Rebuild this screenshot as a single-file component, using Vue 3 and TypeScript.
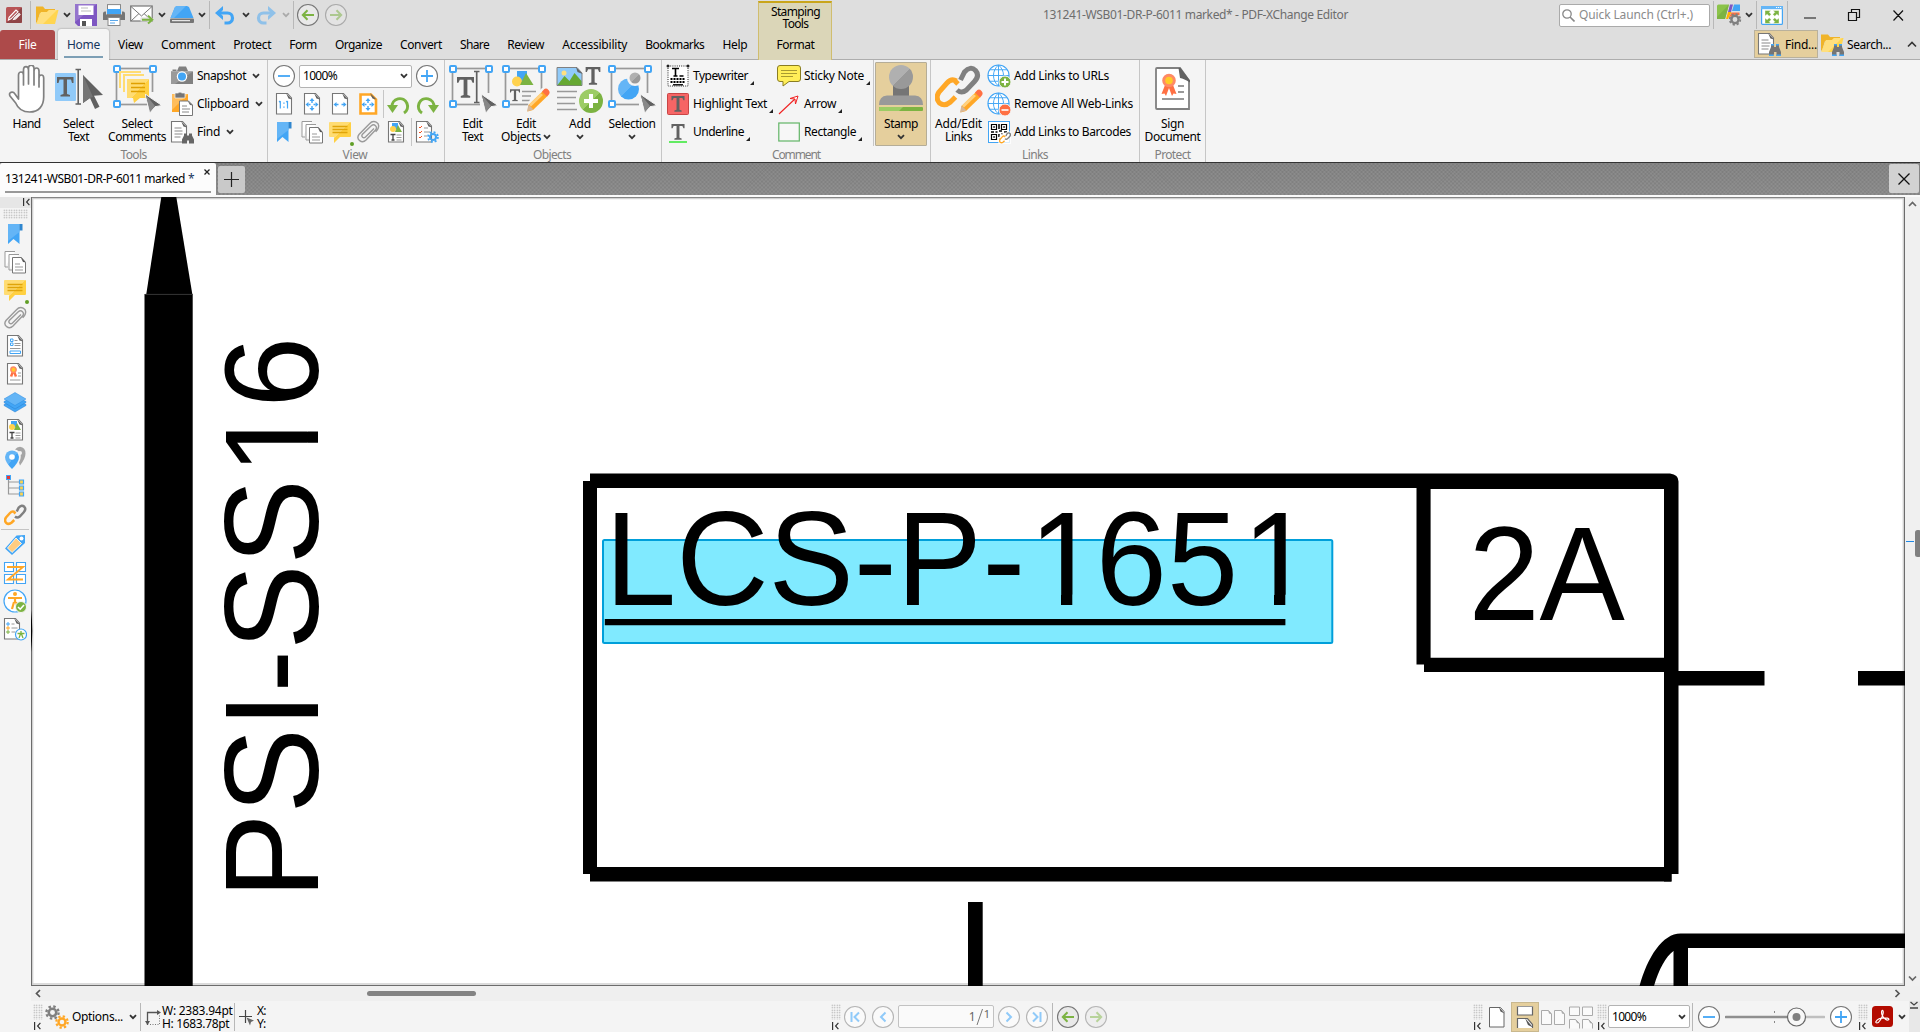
<script setup lang="ts">
import { h } from 'vue'

/** Spreads letter-spacing so that a label takes the given width in pixels. */
const vFit = {
  mounted(el: HTMLElement, binding: { value: number }) {
    const natural = el.getBoundingClientRect().width
    const count = (el.textContent ?? '').length
    if (natural > 0 && count > 0) {
      el.style.letterSpacing = `${(binding.value - natural) / count}px`
    }
  },
}

interface IcProps { n: string; w?: number; h?: number }
const Ic = (p: IcProps) =>
  h('svg', { width: p.w ?? 24, height: p.h ?? p.w ?? 24, class: 'ic' }, [
    h('use', { href: '#i-' + p.n, width: '100%', height: '100%' }),
  ])
Ic.props = ['n', 'w', 'h']

const tabs: { label: string; w: number }[] = [
  { label: 'View', w: 25 },
  { label: 'Comment', w: 54 },
  { label: 'Protect', w: 38 },
  { label: 'Form', w: 27.5 },
  { label: 'Organize', w: 47 },
  { label: 'Convert', w: 42 },
  { label: 'Share', w: 29 },
  { label: 'Review', w: 37 },
  { label: 'Accessibility', w: 65 },
  { label: 'Bookmarks', w: 59 },
  { label: 'Help', w: 25 },
]

const tools = [
  { icon: 'snapshot', label: 'Snapshot', w: 49 },
  { icon: 'clipboard', label: 'Clipboard', w: 52 },
  { icon: 'find', label: 'Find', w: 23 },
]
const commentA = [
  { icon: 'typewriter', label: 'Typewriter', w: 55 },
  { icon: 'highlight', label: 'Highlight Text', w: 74 },
  { icon: 'underline', label: 'Underline', w: 51 },
]
const commentB = [
  { icon: 'sticky', label: 'Sticky Note', w: 60 },
  { icon: 'arrow', label: 'Arrow', w: 32 },
  { icon: 'rect', label: 'Rectangle', w: 52 },
]
const links = [
  { icon: 'urladd', label: 'Add Links to URLs', w: 95 },
  { icon: 'urldel', label: 'Remove All Web-Links', w: 119 },
  { icon: 'barcode', label: 'Add Links to Barcodes', w: 117 },
]
const sideTop = ['bookmark', 'pages', 'note', 'clip', 'form', 'cert', 'layers', 'content', 'pins', 'tree', 'link']
const sideBottom = ['tag', 'order', 'access', 'accrep']
</script>

<template>
  <svg class="defs" width="0" height="0">
    <defs>
      <linearGradient id="g-blue" x1="0" y1="0" x2="1" y2="1"><stop offset=".5" stop-color="#64b5f6" /><stop offset=".5" stop-color="#42a5f5" /></linearGradient>
      <linearGradient id="g-yellow" x1="0" y1="0" x2="1" y2="1"><stop offset=".5" stop-color="#ffdc73" /><stop offset=".5" stop-color="#ffd042" /></linearGradient>
      <linearGradient id="g-green" x1="0" y1="0" x2="1" y2="1"><stop offset=".5" stop-color="#9ccc65" /><stop offset=".5" stop-color="#7cb342" /></linearGradient>
      <linearGradient id="g-grey" x1="0" y1="0" x2="1" y2="1"><stop offset=".5" stop-color="#b0b0b0" /><stop offset=".5" stop-color="#999" /></linearGradient>
      <clipPath id="footless"><path d="M-5-130H720V-9.900H-5zM-5-10.500H421V6H-5zM456-10.500h11.300V6H456zM490-10.500H634V6H490zM669-10.500h11.300V6H669z" /></clipPath>
    </defs>
    <symbol id="i-chev" viewBox="0 0 8 6"><path d="M1 1.200l3 3 3-3" fill="none" stroke="#333" stroke-width="1.800" /></symbol>
    <symbol id="i-chevlt" viewBox="0 0 8 6"><path d="M1 1.200l3 3 3-3" fill="none" stroke="#aaa" stroke-width="1.800" /></symbol>
    <symbol id="i-app" viewBox="0 0 16 16">
      <rect width="16" height="16" rx="1.500" fill="#b85456" /><path d="M0 16L16 0v14.500q0 1.500-1.500 1.500z" fill="#8f4446" />
      <path d="M3 10.500l7-7.500 2 1.800-7 7-2.500 1.200zM8 11.500l5-5 1 1-4.500 4.500-2 .500z" fill="none" stroke="#fff" stroke-width="1.100" />
    </symbol>
    <symbol id="i-folder" viewBox="0 0 24 20">
      <path d="M1 1.500h7l2 2.500h10v4H5L2 17.500H1z" fill="#f0b429" /><path d="M6 7h6l2-2h9.500L20 19H1.500z" fill="#ffd550" /><path d="M6 7h6l2-2h8L8 19H1.500z" fill="#ffdf7e" />
    </symbol>
    <symbol id="i-save" viewBox="0 0 22 22">
      <path d="M0 0h22v22H3l-3-3z" fill="#7e57c2" /><path d="M0 0h22L0 18z" fill="#9575cd" />
      <rect x="3.500" y="1.500" width="15" height="9.500" fill="#fff" /><path d="M6 4h7M6 7h10" stroke="#bbb" stroke-width="1" />
      <rect x="5" y="15" width="12" height="7" fill="#fff" /><rect x="7" y="17" width="4" height="5" fill="#555" />
    </symbol>
    <symbol id="i-print" viewBox="0 0 22 22">
      <rect x="4.500" y=".600" width="13" height="10" fill="#fff" stroke="#888" /><path d="M0 9.500q0-2 2-2h1v3h16v-3h1q2 0 2 2V16H0z" fill="#757575" />
      <path d="M4 5h14v5H4z" fill="#42a5f5" /><rect x="5" y="13.500" width="12" height="8" fill="#fff" stroke="#888" /><path d="M7 16.500h8M7 19h5" stroke="#5aa7ea" />
    </symbol>
    <symbol id="i-mail" viewBox="0 0 24 20">
      <rect x=".700" y="1" width="21.500" height="15" fill="#fff" stroke="#777" stroke-width="1.200" /><path d="M1 1.500l10.500 9.500L22 1.500M1 16l8-7.500M22 16l-8-7.500" fill="none" stroke="#777" stroke-width="1" />
      <path d="M10.500 12.500h7V9L24 14.700 17.500 20v-3.500h-7z" fill="#dedede" /><path d="M12 14.700h10M18 10.800l4.300 3.900-4.300 3.900" fill="none" stroke="#7cb342" stroke-width="2" />
    </symbol>
    <symbol id="i-scan" viewBox="0 0 24 18">
      <path d="M5 1l2-1h10l2 1 4.500 11H.500z" fill="#42a5f5" /><path d="M5 1l2-1h9L4 12H.500z" fill="#64b5f6" /><rect y="12.500" width="24" height="4.500" rx="1" fill="#757575" /><path d="M2 14.700h18" stroke="#fff" />
    </symbol>
    <symbol id="i-undo" viewBox="0 0 21 19"><path d="M3 7h9.500a5 5 0 0 1 0 10H9.500" fill="none" stroke="#42a5f5" stroke-width="3.200" /><path d="M0 7L8 0v4L5 7l3 3v4z" fill="#42a5f5" /></symbol>
    <symbol id="i-back" viewBox="0 0 24 24"><circle cx="12" cy="12" r="10.500" fill="#e9e9e9" stroke="#777" stroke-width="1.100" /><path d="M18 12H7M11.500 7.200L6.800 12l4.700 4.800" fill="none" stroke="#7cb342" stroke-width="2" /></symbol>
    <symbol id="i-first" viewBox="0 0 24 24"><circle cx="12" cy="12" r="10.500" fill="#fafafa" stroke="#b5b5b5" stroke-width="1.100" /><path d="M8.500 7v10M16 7.500L11.500 12l4.500 4.500" fill="none" stroke="#90caf9" stroke-width="2" /></symbol>
    <symbol id="i-prev" viewBox="0 0 24 24"><circle cx="12" cy="12" r="10.500" fill="#fafafa" stroke="#b5b5b5" stroke-width="1.100" /><path d="M14.500 7.500L10 12l4.500 4.500" fill="none" stroke="#90caf9" stroke-width="2" /></symbol>
    <symbol id="i-minus" viewBox="0 0 24 24"><circle cx="12" cy="12" r="10.500" fill="#fff" stroke="#777" stroke-width="1.100" /><path d="M6 12h12" stroke="#42a5f5" stroke-width="1.800" /></symbol>
    <symbol id="i-plus" viewBox="0 0 24 24"><circle cx="12" cy="12" r="10.500" fill="#fff" stroke="#777" stroke-width="1.100" /><path d="M6 12h12M12 6v12" stroke="#42a5f5" stroke-width="1.800" /></symbol>
    <symbol id="i-map" viewBox="0 0 26 22">
      <path d="M0 2q0-1.500 1.500-1.500H12L8 15H0z" fill="#8bc34a" /><path d="M0 13L12 .500 8 15H0z" fill="#7cb342" /><path d="M13 .500h3L14 8h-3z" fill="#7e57c2" /><path d="M17 .500h6V7h-8z" fill="#42a5f5" /><path d="M14.500 8.500h8V11L12 13z" fill="#ff7043" /><path d="M14.500 8l-3.500 7H9l2-7z" fill="#ffb300" />
      <circle cx="18" cy="15.500" r="3.600" fill="none" stroke="#808080" stroke-width="2.400" /><circle cx="18" cy="15.500" r="5.300" fill="none" stroke="#808080" stroke-width="1.800" stroke-dasharray="2.200 1.960" />
    </symbol>
    <symbol id="i-full" viewBox="0 0 22 19">
      <rect x=".600" y=".600" width="20.800" height="17.800" rx="1" fill="#fff" stroke="#42a5f5" stroke-width="1.200" /><path d="M0 0h22v3.200H0z" fill="#64b5f6" /><path d="M15 1.500h1.200M17 1.500h1.200M19 1.500h1.200" stroke="#fff" />
      <path d="M4 4.500h6L8.200 6.300l2 2-2 2-2-2L4 10zM18 4.500h-6l1.800 1.800-2 2 2 2 2-2L18 10zM4 17.500h6l-1.800-1.800 2-2-2-2-2 2L4 12zM18 17.500h-6l1.800-1.800-2-2 2-2 2 2L18 12z" fill="#7cb342" stroke="#fff" stroke-width=".400" />
    </symbol>
    <symbol id="i-glass" viewBox="0 0 13 13"><circle cx="5" cy="5" r="4.200" fill="none" stroke="#888" stroke-width="1.300" /><path d="M8 8l4.500 4.500" stroke="#888" stroke-width="1.600" /></symbol>
    <symbol id="i-doc" viewBox="0 0 24 24"><path d="M4.500 1.500h11l4 4.500v16h-15z" fill="#fff" stroke="#777" stroke-width="1.100" /><path d="M14 1l6 6.500-3.500-1z" fill="#616161" /></symbol>
    <symbol id="i-bino" viewBox="0 0 12 12"><path d="M2 1h3v2h2V1h3v2l2 5v4H7.500V8h-3v4H0V8l2-5z" fill="#757575" /><path d="M2 0h3v1.500H2zM7 0h3v1.500H7zM0 10.500h4.500V12H0zM7.500 10.500H12V12H7.500z" fill="#42a5f5" /></symbol>
    <symbol id="i-finddoc" viewBox="0 0 24 24"><use href="#i-doc" x="-3" y="0" width="24" height="24" /><path d="M4.500 8h7M4.500 11h9M4.500 14h8M4.500 17h7" stroke="#888" /><use href="#i-bino" x="12" y="12" width="12" height="12" /></symbol>
    <symbol id="i-searchf" viewBox="0 0 24 24"><use href="#i-folder" x="0" y="1" width="24" height="20" /><use href="#i-bino" x="12" y="12" width="12" height="12" /></symbol>
    <symbol id="i-hand" viewBox="0 0 48 48">
      <path d="M15.500 27V10c0-4 5-4 5 0v10V5c0-4.500 5-4.500 5 0v14V3.500c0-4.500 5.500-4.500 5.500 0V20 6c0-4 5-4 5 0v16-9c0-4 4.700-4 4.700 0v19c0 9-5 15-14 15-8 0-12-4-14-9L7 31c-2-4 3-5 5-2l3.500 5z" fill="#fff" stroke="#808080" stroke-width="1.700" stroke-linejoin="round" />
    </symbol>
    <symbol id="i-seltext" viewBox="0 0 48 48">
      <rect y="8" width="21" height="28" rx="1" fill="#90caf9" />
      <path d="M2 12h16.500v6H17l-1-3.500h-4V29l3 1v1.500H5.500V30l3-1V14.500h-4l-1 3.500H2z" fill="#616161" />
      <path d="M20.500 4.500h5.500M20.500 39h5.500M23.200 4.500V39" stroke="#616161" stroke-width="1.600" />
      <path d="M28 10l20 20-9 .800 5.500 11-4.500 2.200-5-11L28 38z" fill="#616161" /><path d="M28 10l10 22-3 1-7 5z" fill="#757575" />
    </symbol>
    <symbol id="i-frame" viewBox="0 0 48 48">
      <rect x="3.500" y="3.500" width="36" height="36" fill="none" stroke="#999" stroke-width="1.700" />
      <g fill="#fff" stroke="#42a5f5" stroke-width="2"><rect x="1" y="1" width="6" height="6" rx="1" /><rect x="37" y="1" width="6" height="6" rx="1" /><rect x="1" y="36" width="6" height="6" rx="1" /></g>
    </symbol>
    <symbol id="i-corner" viewBox="0 0 17 20"><path d="M0 0l17 11.500-7 1.200L5 18.500z" fill="#616161" stroke="#f4f4f4" stroke-width="1" /><path d="M1 1l9 11-5 6z" fill="#888" /></symbol>
    <symbol id="i-selcom" viewBox="0 0 48 48">
      <use href="#i-frame" width="48" height="48" /><path d="M34 32v12H46V27H38z" fill="#f4f4f4" />
      <path d="M7 23V7h21M11 27V10h20" fill="none" stroke="#ffdc73" stroke-width="2" /><path d="M14 14h22v19H27l-6 5-1-5h-6z" fill="url(#g-yellow)" /><path d="M18 18.500h14M18 22.500h14M18 26.500h14" stroke="#e0a000" stroke-width="1.500" />
      <use href="#i-corner" x="32" y="29" width="17" height="20" />
    </symbol>
    <symbol id="i-snapshot" viewBox="0 0 24 24"><path d="M1 7.500h22V20H1zM7 7l2-4.500h7L18 7zM2.500 5.500h4V7h-4z" fill="#808080" /><path d="M1 7.500h22L5 20H1z" fill="#9a9a9a" /><circle cx="12" cy="12.500" r="5.200" fill="#fff" /><circle cx="12" cy="12.500" r="4" fill="#42a5f5" /></symbol>
    <symbol id="i-clipboard" viewBox="0 0 24 24">
      <path d="M2 2h16v18H2z" fill="#ffa726" /><path d="M2 2h16L2 18z" fill="#ffbd5b" /><path d="M5 1h3q2-2 4 0h3v5H5z" fill="#757575" stroke="#f4f4f4" stroke-width=".700" />
      <path d="M9.500 9h9l4 4v10.500h-13z" fill="#fff" stroke="#777" /><path d="M17.500 8.500l5.500 5-3-.500z" fill="#666" /><path d="M12 14h5M12 17h8M12 20h7" stroke="#888" />
    </symbol>
    <symbol id="i-find" viewBox="0 0 24 24"><use href="#i-doc" x="-3" y="0" width="24" height="24" /><path d="M4.500 8h7M4.500 11h8M4.500 14h8M4.500 17h6" stroke="#888" /><path d="M14 13.500h3v2h2v-2h3v2l2 4v4h-5v-3h-2v3h-5v-4l2-4z" fill="#666" /></symbol>
    <symbol id="i-one" viewBox="0 0 24 24"><use href="#i-doc" width="24" height="24" /><path d="M8.300 9v7.500M7 10l1.300-1M15.500 9v7.500M14.200 10l1.300-1" fill="none" stroke="#42a5f5" stroke-width="1.200" /><path d="M11.300 10.500h1.300v1.300h-1.300zM11.300 14.500h1.300v1.300h-1.300z" fill="#42a5f5" /></symbol>
    <symbol id="i-cross4" viewBox="0 0 24 24"><path d="M12 6l2.500 3h-5zM12 19l2.500-3h-5zM5.500 12.500l3-2.500v5zM18.500 12.500l-3-2.500v5z" fill="#42a5f5" /><path d="M12 9v2M12 14v2M8.500 12.500h2M13.500 12.500h2" stroke="#42a5f5" stroke-width="1.400" /></symbol>
    <symbol id="i-fitpage" viewBox="0 0 24 24"><use href="#i-doc" width="24" height="24" /><use href="#i-cross4" width="24" height="24" /></symbol>
    <symbol id="i-fitwidth" viewBox="0 0 24 24"><use href="#i-doc" width="24" height="24" /><path d="M5.500 12.500l3-2.500v5zM18.500 12.500l-3-2.500v5z" fill="#42a5f5" /><path d="M8 12.500h2.500M13.500 12.500h2.500" stroke="#42a5f5" stroke-width="1.400" /></symbol>
    <symbol id="i-fitvis" viewBox="0 0 24 24"><path d="M4.500 2.500h10.500l5 5v14h-15.500z" fill="#fff" stroke="#ffa726" stroke-width="2.600" /><path d="M14 1l6.500 6.500-4-1z" fill="#616161" /><use href="#i-cross4" width="24" height="24" /></symbol>
    <symbol id="i-rotl" viewBox="0 0 24 24"><path d="M5 15a7.800 7.800 0 1 1 12 6" fill="none" stroke="#7cb342" stroke-width="3" /><path d="M0 13h11l-5.500 8z" fill="#7cb342" /></symbol>
    <symbol id="i-bookmark" viewBox="0 0 24 24"><path d="M5 2h11.500v20l-6-5L5 22z" fill="#42a5f5" /><path d="M5 2h11.500v8L5 19z" fill="#64b5f6" /><path d="M16.500 2h3v6.500h-3z" fill="#2f86cf" /></symbol>
    <symbol id="i-pages" viewBox="0 0 24 24"><g fill="#fff" stroke="#999"><path d="M2 17V1.500h10M2 17h3M6 20V4.500h10M6 20h3" /></g><path d="M9.500 7.500h9l4 5v10.500h-13z" fill="#fff" stroke="#777" /><path d="M17.500 7l5.500 5.500-3-.500z" fill="#555" /><path d="M12 14h5M12 17h8M12 20h8" stroke="#999" /></symbol>
    <symbol id="i-note" viewBox="0 0 24 24"><path d="M2 2h20q1 0 1 1v13q0 1-1 1H12l-6 6v-6H2q-1 0-1-1V3q0-1 1-1z" fill="url(#g-yellow)" /><path d="M4.500 6.500h15M4.500 9.500h15M4.500 12.500h15" stroke="#dfa40a" stroke-width="1.300" /></symbol>
    <symbol id="i-clip" viewBox="0 0 24 24"><path d="M18 9l-8.500 8.500c-2 2-4.800-.500-3-2.700L15 6.500c3.500-3 7 .800 4.500 4L10 20.500c-4 4-10.500-.500-7-5.500L13.500 4.200c4-4.400 10.800-1.500 8.700 4.500-.500 1.500-1.500 2.500-2.500 3.500" fill="none" stroke="#9a9a9a" stroke-width="1.400" transform="translate(0 -.500)" /></symbol>
    <symbol id="i-content" viewBox="0 0 24 24"><use href="#i-doc" width="24" height="24" /><path d="M8 3h6v6H8z" fill="#42a5f5" /><circle cx="9" cy="9" r="3" fill="#ffd24d" /><path d="M14 5l4 7h-7z" fill="#7cb342" /><path d="M6.500 14.500h5M9 14.500V20M7.500 20h3" stroke="#444" stroke-width="1.300" /><path d="M12.500 15h5M12.500 17.500h5M12.500 20h5" stroke="#999" /></symbol>
    <symbol id="i-gear" viewBox="0 0 14 14"><circle cx="7" cy="7" r="3.500" fill="none" stroke="currentColor" stroke-width="2.400" /><circle cx="7" cy="7" r="5.700" fill="none" stroke="currentColor" stroke-width="2.200" stroke-dasharray="2.300 2.177" /></symbol>
    <symbol id="i-optdoc" viewBox="0 0 24 24"><use href="#i-doc" x="-3" y="0" width="24" height="24" /><path d="M4 7l1 1 2-2M4 12l1 1 2-2M4 17l1 1 2-2" fill="none" stroke="#f4511e" /><path d="M9 8h4M9 12h6M9 16h3" stroke="#999" /><use href="#i-gear" x="12" y="11" width="12" height="12" color="#42a5f5" /></symbol>
    <symbol id="i-bigT" viewBox="0 0 18 22"><path d="M0 0h18v6h-1.500L15 2.800h-4V19l3 1v1.800H4V20l3-1V2.800H3L1.500 6H0z" fill="#616161" /></symbol>
    <symbol id="i-edtext" viewBox="0 0 48 48"><use href="#i-frame" width="48" height="48" /><path d="M31 34v10h14V28H36z" fill="#f4f4f4" /><use href="#i-bigT" x="8" y="12" width="17" height="21" /><path d="M25 6.500h5.500M25 37.500h5.500M27.700 6.500v31" stroke="#616161" stroke-width="1.700" /><use href="#i-corner" x="32" y="29" width="17" height="20" /></symbol>
    <symbol id="i-pencil" viewBox="0 0 24 24"><path d="M17 3l4.500 5L7 22l-5.500 1.500L2.500 17z" fill="#ffa726" /><path d="M14.500 5L3 16.500l2 2L17 7z" fill="#ffd180" /><path d="M17 2.500Q19.500-1 22.500 2q2.500 3-.500 5.500l-1 1L16 3.500z" fill="#ff7043" /><path d="M2.500 16.500l5 5-6.500 2z" fill="#d7b899" /></symbol>
    <symbol id="i-edobj" viewBox="0 0 48 48">
      <use href="#i-frame" width="48" height="48" /><path d="M15 6h10v12H15z" fill="#42a5f5" /><circle cx="15" cy="16.500" r="5" fill="#ffd24d" /><path d="M24 8l7.500 12H18z" fill="#7cb342" /><use href="#i-bigT" x="8" y="24" width="10" height="12.500" /><path d="M20 26.500h14M20 31h9M20 35.500h8" stroke="#999" stroke-width="1.400" />
      <path d="M24 46l3-10 13-13h8v25z" fill="#f4f4f4" /><use href="#i-pencil" x="24" y="23" width="24" height="24" />
    </symbol>
    <symbol id="i-add" viewBox="0 0 48 48">
      <path d="M1 2.500h20l5 5.500v12.500H1z" fill="#90caf9" stroke="#808080" /><circle cx="8" cy="8" r="2.500" fill="#ffe082" /><path d="M1.500 20l7-9 5 5 5-8 7 8v4.500z" fill="#66a832" /><path d="M20 2l6.500 7-5-2z" fill="#616161" /><use href="#i-bigT" x="29" y="2" width="16" height="18" />
      <path d="M1 26.500h20M1 32.500h19M1 38.500h18M1 44.500h20" stroke="#999" stroke-width="1.500" /><circle cx="35" cy="36" r="12" fill="url(#g-green)" /><path d="M28 36h14M35 29v14" stroke="#fff" stroke-width="4" />
    </symbol>
    <symbol id="i-selection" viewBox="0 0 48 48"><use href="#i-frame" width="48" height="48" /><path d="M31 34v10h14V28H36z" fill="#f4f4f4" /><circle cx="20.500" cy="24" r="10.500" fill="url(#g-blue)" /><circle cx="27" cy="13" r="8" fill="#f4f4f4" /><circle cx="27" cy="13" r="5.500" fill="url(#g-grey)" /><use href="#i-corner" x="32" y="29" width="17" height="20" /></symbol>
    <symbol id="i-typewriter" viewBox="0 0 24 24"><rect x="2" y="2" width="20" height="20" fill="#fff" stroke="#222" stroke-dasharray="1 1.200" /><g fill="#222"><circle cx="2" cy="2" r="1.500" /><circle cx="22" cy="2" r="1.500" /></g><path d="M6 4.500h7M9.500 4.500v7.500M7.500 12h4M13.500 12h4" stroke="#000" stroke-width="1.600" /><path d="M4.500 15h15M4.500 18h15" stroke="#000" stroke-width="2.200" stroke-dasharray="2 1" /><path d="M7 20.800h10" stroke="#000" stroke-width="1.400" /></symbol>
    <symbol id="i-highlight" viewBox="0 0 24 24"><rect x="1.500" y="1.500" width="21" height="21" rx="1" fill="#f66565" stroke="#c94545" /><use href="#i-bigT" x="5" y="4" width="14" height="16" /></symbol>
    <symbol id="i-underline" viewBox="0 0 24 24"><use href="#i-bigT" x="5" y="4" width="14" height="16" /><path d="M3 22h18" stroke="#00e400" stroke-width="1.200" /></symbol>
    <symbol id="i-sticky" viewBox="0 0 24 24"><path d="M3 1.500h18q2.500 0 2.500 2.500v11q0 2.500-2.500 2.500H12L6 22v-4.500H3Q.500 17.500.500 15V4Q.500 1.500 3 1.500z" fill="#ffee58" stroke="#8a7d22" /><path d="M4 6.500h16M4 9.500h16M4 12.500h12" stroke="#a89a30" stroke-width="1.200" /></symbol>
    <symbol id="i-arrow" viewBox="0 0 24 24"><path d="M2 22L20 5" stroke="#f02020" stroke-width="1.100" /><path d="M21 4l-8 2.500 5 .500.500 5z" fill="#fff" stroke="#f02020" /></symbol>
    <symbol id="i-rect" viewBox="0 0 24 24"><rect x="1.800" y="3" width="20.500" height="18" fill="#f7f7f7" stroke="#62b566" stroke-width="1.200" /></symbol>
    <symbol id="i-stamp" viewBox="0 0 48 48"><path d="M16 20h16v12H16z" fill="#757575" /><circle cx="24" cy="12" r="12" fill="url(#g-grey)" /><path d="M2 40q0-9 8-9.500h28q8 .500 8 9.500z" fill="#999" /><rect x="2" y="42" width="44" height="4" rx="1" fill="#7cb342" /><path d="M3 42h23l-4 4H3q-1 0-1-1v-2q0-1 1-1z" fill="#9ccc65" /></symbol>
    <symbol id="i-chain" viewBox="0 0 48 48">
      <g fill="none" stroke-width="5"><path d="M26 14l4-8q6-6.500 11-1.500 4.500 5-1 11L32 24q-5 4-9.500 0" stroke="#808080" transform="translate(-.500 1)" /><path d="M21.500 16q-5-3-9.500 2l-8 9q-4 6 .500 11 5 4 11-1l5-5" stroke="#ffa726" /><path d="M20 16q3 3 3 3" stroke="#ffa726" /></g>
    </symbol>
    <symbol id="i-addlinks" viewBox="0 0 48 48"><use href="#i-chain" width="48" height="48" /><use href="#i-pencil" x="24" y="24" width="24" height="24" /></symbol>
    <symbol id="i-link" viewBox="0 0 24 24"><use href="#i-chain" x="1" y="2" width="24" height="24" /></symbol>
    <symbol id="i-globe" viewBox="0 0 24 24"><circle cx="12" cy="12" r="11" fill="#fff" stroke="#42a5f5" stroke-width="1.200" /><path d="M1 12h22M12 1v22M3.500 6h17M3.500 18h17M12 1c-7 6-7 16 0 22M12 1c7 6 7 16 0 22" fill="none" stroke="#42a5f5" stroke-width="1" /></symbol>
    <symbol id="i-urladd" viewBox="0 0 24 24"><use href="#i-globe" width="23" height="23" /><circle cx="18" cy="18" r="6" fill="#7cb342" stroke="#f4f4f4" /><path d="M14.500 18h7M18 14.500v7" stroke="#fff" stroke-width="2" /></symbol>
    <symbol id="i-urldel" viewBox="0 0 24 24"><use href="#i-globe" width="23" height="23" /><circle cx="18" cy="18" r="6" fill="#ff7043" stroke="#f4f4f4" /><path d="M14.500 18h7" stroke="#fff" stroke-width="1.600" /></symbol>
    <symbol id="i-barcode" viewBox="0 0 24 24">
      <rect x="1.500" y="1.500" width="21" height="21" fill="#fff" stroke="#42a5f5" /><g fill="none" stroke="#000" stroke-width="1.200"><path d="M4.500 4.500h5v5h-5zM14.500 4.500h5v5h-5zM4.500 14.500h5v5h-5z" /><path d="M4 12h3M8.500 12h2M12 4v5M12 11h3M17 12h3M12 14v3M14 14h2M12 19h2" stroke-width="1.500" /></g><path d="M6.300 6.300h1.500v1.500H6.300zM16.300 6.300h1.500v1.500h-1.500zM6.300 16.300h1.500v1.500H6.300z" />
      <path d="M11 24l2-10 11-3v13z" fill="#fff" opacity=".8" /><use href="#i-chain" x="12" y="12" width="13" height="13" />
    </symbol>
    <symbol id="i-rosette" viewBox="0 0 16 24"><path d="M4 12L.500 21l3-.500L5 23l3-8 3 8 1.500-2.500 3 .500L12 12z" fill="#ff7043" /><circle cx="8" cy="7.500" r="5.300" fill="#ffca28" stroke="#ff8a65" stroke-width="3" /></symbol>
    <symbol id="i-sign" viewBox="0 0 48 48"><path d="M8 3h23l9 12.500V44H8Q7 44 7 43V4q0-1 1-1z" fill="#fff" stroke="#808080" stroke-width="1.800" /><path d="M29.500 3h2L41 15.500v2q-6-4-10-4.500z" fill="#616161" /><use href="#i-rosette" x="12" y="8" width="16" height="24" /><path d="M29 21h6M29 27h6M13 34h22" stroke="#999" stroke-width="1.800" /></symbol>
    <symbol id="i-form" viewBox="0 0 24 24"><use href="#i-doc" width="24" height="24" /><path d="M7.500 5h2.500v2.500H7.500zM7.500 9h2.500v2.500H7.500zM7 17h10.500v2.500H7z" fill="none" stroke="#42a5f5" /><path d="M11.500 6.500h3M11.500 9.500h6M11.500 11.500h6M7 14.500h10.500" stroke="#999" /></symbol>
    <symbol id="i-cert" viewBox="0 0 24 24"><use href="#i-doc" width="24" height="24" /><use href="#i-rosette" x="6" y="4" width="9" height="12" /><path d="M15 11h3M15 14h3M7 18h10.500" stroke="#999" stroke-width="1.200" /></symbol>
    <symbol id="i-layers" viewBox="0 0 24 24"><path d="M1 14.500l11-5 11 5v1l-11 6.500-11-6.500z" fill="#42a5f5" stroke="#2b7fd0" stroke-width=".500" /><path d="M1 11.500l11-5 11 5v1L12 19 1 12.500z" fill="#42a5f5" stroke="#2b7fd0" stroke-width=".500" /><path d="M1 9l11-6.500L23 9l-11 6.500z" fill="#64b5f6" stroke="#2b8ae0" stroke-width=".500" /></symbol>
    <symbol id="i-pins" viewBox="0 0 24 24"><path d="M12 3.500Q14 .800 17 .800q5.500.700 5.500 6.700 0 5-5.500 12l-1-3q2.500-4.500 1.500-8.500-1.500-4-5.500-4.500z" fill="#a5a5a5" /><circle cx="17" cy="7" r="2" fill="#f4f4f4" /><path d="M9 23q-7-7-7-12 1-6.500 7-6.500T16 11q0 5-7 12z" fill="url(#g-blue)" /><circle cx="9" cy="11" r="2.800" fill="#fff" /></symbol>
    <symbol id="i-tree" viewBox="0 0 24 24"><path d="M5.500 4v16H19M5.500 8H19M5.500 14H19" fill="none" stroke="#999" stroke-width="1.200" /><rect x="3.500" y="1.500" width="4" height="4" fill="#e53935" stroke="#42a5f5" /><g fill="#ffd24d" stroke="#42a5f5" stroke-width="1.200"><path d="M16.500 6h4v4h-4zM16.500 12h4v4h-4zM16.500 18h4v4h-4z" /></g></symbol>
    <symbol id="i-tag" viewBox="0 0 24 24"><path d="M13.500 2.500L22 2v8L9 22 2 15.500z" fill="#42a5f5" /><path d="M13 5l5.500 5.500L9 19.500 4.500 15z" fill="#ffcc80" stroke="#fff" stroke-width=".800" /><circle cx="18.500" cy="5.500" r="2" fill="#fff" /></symbol>
    <symbol id="i-order" viewBox="0 0 24 24"><path d="M1.500 1.500h9v9h-9zM13.500 1.500h9v9h-9zM1.500 13.500h9v9h-9zM13.500 13.500h9v9h-9z" fill="#fff" stroke="#42a5f5" stroke-width="1.100" /><path d="M4 6h16L5 18.500h15" fill="none" stroke="#ffa726" stroke-width="1.900" /></symbol>
    <symbol id="i-access" viewBox="0 0 24 24"><circle cx="12" cy="12" r="11" fill="#fff" stroke="#42a5f5" stroke-width="1.200" /><circle cx="12" cy="5" r="2" fill="#ffa726" /><path d="M5 9h14M12 9v5M11 13l-2 7M13 13l2 6" stroke="#ffa726" stroke-width="2.200" /><circle cx="18" cy="18" r="5.500" fill="#7cb342" stroke="#f4f4f4" /><path d="M15 18l2.200 2.200L21 16" fill="none" stroke="#fff" stroke-width="1.600" /></symbol>
    <symbol id="i-accrep" viewBox="0 0 24 24"><use href="#i-doc" x="-3" y="0" width="24" height="24" /><g fill="none"><path d="M4 6h2v2H4z" stroke="#42a5f5" /><path d="M4 10h2v2H4z" stroke="#ffa726" /><path d="M4 14h2v2H4z" stroke="#7cb342" /></g><path d="M8.500 7h3M8.500 11h6M8.500 15h4" stroke="#999" /><circle cx="18" cy="17.500" r="5.500" fill="#fff" stroke="#42a5f5" stroke-width="1.200" /><path d="M14.500 16.500h7M18 14v3M17.500 17l-1.500 4M18.500 17l1.500 4" stroke="#7cb342" stroke-width="1.300" /></symbol>
    <symbol id="i-pdf" viewBox="0 0 22 22"><rect width="21" height="21" rx="3.500" fill="#b30b00" /><path d="M4 15.500c1.500-2.500 6-4 11.500-3.300 3 .8.500 3-2 1-3-2-4.500-6-3.700-8.200.8-1.500 1.800 0 1.300 2.500C10.300 11.500 7 17 5 17c-1 0-1.400-.700-1-1.500z" fill="none" stroke="#fff" stroke-width="1.200" /></symbol>
    <symbol id="i-pin" viewBox="0 0 7 8"><path d="M.600 0v8M6.400 .900L3.600 4l2.800 3.100" fill="none" stroke="#333" stroke-width="1.200" /></symbol>
  </svg>

  <div class="app">
    <header class="title">
      <div class="qat">
        <Ic class="ml6" n="app" :w="16" /><i class="vs ml8" />
        <Ic class="ml4" n="folder" :w="24" :h="20" /><Ic class="ml4" n="chev" :w="8" :h="6" />
        <Ic class="ml4" n="save" :w="22" /><Ic class="ml6" n="print" :w="22" />
        <Ic class="ml5" n="mail" :w="24" :h="20" /><Ic class="ml4" n="chev" :w="8" :h="6" />
        <Ic class="ml4" n="scan" :w="24" :h="18" /><Ic class="ml4" n="chev" :w="8" :h="6" /><i class="vs ml3" />
        <Ic class="ml5" n="undo" :w="21" :h="19" /><Ic class="ml6" n="chev" :w="8" :h="6" />
        <Ic class="ml5 flip dim" n="undo" :w="21" :h="19" /><Ic class="ml6" n="chevlt" :w="8" :h="6" /><i class="vs ml3" />
        <Ic class="ml2" n="back" :w="24" /><Ic class="ml4 flip dim" n="back" :w="24" />
      </div>
      <span class="caption"><span v-fit="305">131241-WSB01-DR-P-6011 marked* - PDF-XChange Editor</span></span>
      <div class="winbar">
        <div class="quick"><Ic n="glass" :w="13" /><span v-fit="114">Quick Launch (Ctrl+.)</span></div>
        <i class="vs ml3" /><Ic class="ml3" n="map" :w="26" :h="22" /><Ic class="ml2" n="chev" :w="8" :h="6" />
        <i class="vs ml3" /><Ic class="ml4" n="full" :w="22" :h="19" /><i class="vs ml4" />
        <svg class="wc" width="132" height="30"><path d="M16 18h12M60.500 12.500h8v8h-8zM63.500 12.500v-3h8v8h-3M105.500 10.500l9.500 10M115 10.500l-9.500 10" fill="none" stroke="#111" stroke-width="1.200" /></svg>
      </div>
    </header>

    <nav class="tabs">
      <span class="file"><span v-fit="18">File</span></span>
      <span class="home"><span v-fit="33">Home</span><b /></span>
      <div class="tablist"><span v-for="t in tabs" :key="t.label" v-fit="t.w">{{ t.label }}</span></div>
      <div class="ctx">
        <span v-fit="49" class="c1">Stamping</span><span v-fit="26" class="c2">Tools</span><span v-fit="38" class="c3">Format</span>
      </div>
      <div class="right">
        <div class="findbtn"><Ic n="finddoc" /><span v-fit="32">Find...</span></div>
        <div class="searchbtn"><Ic n="searchf" /><span v-fit="44">Search...</span></div>
        <svg width="10" height="7"><path d="M1 5.500l4-4 4 4" fill="none" stroke="#333" stroke-width="1.600" /></svg>
      </div>
    </nav>

    <section class="ribbon">
      <div class="group tools">
        <div class="body">
          <div class="big w53"><Ic n="hand" :w="48" /><span v-fit="28">Hand</span></div>
          <div class="big w52"><Ic n="seltext" :w="48" /><span v-fit="31">Select</span><span v-fit="21">Text</span></div>
          <div class="big w65"><Ic n="selcom" :w="48" /><span v-fit="31">Select</span><span v-fit="58">Comments</span></div>
          <div class="col">
            <div v-for="r in tools" :key="r.label" class="small"><Ic :n="r.icon" /><span v-fit="r.w">{{ r.label }}</span><Ic class="ml6" n="chev" :w="8" :h="6" /></div>
          </div>
        </div>
        <div class="cap"><span v-fit="26">Tools</span></div>
      </div>
      <div class="group view">
        <div class="body col">
          <div class="small"><Ic n="minus" /><div class="combo wide"><span v-fit="34">1000%</span><Ic n="chev" :w="8" :h="6" /></div><Ic n="plus" /></div>
          <div class="small gap4"><Ic n="one" /><Ic n="fitpage" /><Ic n="fitwidth" /><Ic n="fitvis" /><i class="ss" /><Ic n="rotl" /><Ic class="flip" n="rotl" /></div>
          <div class="small gap4"><Ic n="bookmark" /><Ic n="pages" /><span class="dotted"><Ic n="note" /><em /></span><Ic n="clip" /><Ic n="content" /><i class="ss" /><Ic n="optdoc" /></div>
        </div>
        <div class="cap"><span v-fit="25">View</span></div>
      </div>
      <div class="group objects">
        <div class="body">
          <div class="big w55"><Ic n="edtext" :w="48" /><span v-fit="20">Edit</span><span v-fit="21">Text</span></div>
          <div class="big w52"><Ic n="edobj" :w="48" /><span v-fit="20">Edit</span><span class="withchev"><span v-fit="40">Objects</span><Ic n="chev" :w="8" :h="6" /></span></div>
          <div class="big w56"><Ic n="add" :w="48" /><span v-fit="22">Add</span><Ic class="dc" n="chev" :w="8" :h="6" /></div>
          <div class="big w48"><Ic n="selection" :w="48" /><span v-fit="47">Selection</span><Ic class="dc" n="chev" :w="8" :h="6" /></div>
        </div>
        <div class="cap"><span v-fit="38">Objects</span></div>
      </div>
      <div class="group comment">
        <div class="body">
          <div class="col c111"><div v-for="r in commentA" :key="r.label" class="small"><Ic :n="r.icon" /><span v-fit="r.w">{{ r.label }}</span><u /></div></div>
          <div class="col c98"><div v-for="r in commentB" :key="r.label" class="small"><Ic :n="r.icon" /><span v-fit="r.w">{{ r.label }}</span><u /></div></div>
          <div class="stamp big"><Ic n="stamp" :w="48" /><span v-fit="34">Stamp</span><Ic class="dc" n="chev" :w="8" :h="6" /></div>
        </div>
        <div class="cap"><span v-fit="48">Comment</span></div>
      </div>
      <div class="group links">
        <div class="body">
          <div class="big w55"><Ic n="addlinks" :w="48" /><span v-fit="47">Add/Edit</span><span v-fit="27">Links</span></div>
          <div class="col"><div v-for="r in links" :key="r.label" class="small"><Ic :n="r.icon" /><span v-fit="r.w">{{ r.label }}</span></div></div>
        </div>
        <div class="cap"><span v-fit="26">Links</span></div>
      </div>
      <div class="group protect">
        <div class="body"><div class="big w65"><Ic n="sign" :w="48" /><span v-fit="23">Sign</span><span v-fit="56">Document</span></div></div>
        <div class="cap"><span v-fit="36">Protect</span></div>
      </div>
    </section>

    <div class="strip">
      <div class="doctab"><span v-fit="180">131241-WSB01-DR-P-6011 marked</span><span class="star">*</span>
        <svg class="x" width="6" height="6"><path d="M.500.500l5 5M5.500.500l-5 5" stroke="#222" stroke-width="1.300" /></svg><b />
      </div>
      <div class="newtab"><svg width="15" height="15"><path d="M0 7.500h15M7.500 0v15" stroke="#222" stroke-width="1.200" /></svg></div>
      <div class="closeall"><svg width="12" height="12"><path d="M.500.500l11 11M11.500.500l-11 11" stroke="#111" stroke-width="1.300" /></svg></div>
    </div>

    <div class="mid">
      <aside class="side">
        <div class="sidehead"><Ic n="pin" :w="7" :h="8" /></div>
        <i class="grip hg" />
        <div class="icons">
          <span v-for="s in sideTop" :key="s" class="dotted"><Ic :n="s" /><em v-if="s === 'note'" /></span>
        </div>
        <hr>
        <div class="icons"><span v-for="s in sideBottom" :key="s"><Ic :n="s" /></span></div>
      </aside>
      <main class="view-area">
        <div class="row">
          <svg class="page" width="1874" height="789" viewBox="31 197 1874 789">
            <rect x="31" y="197" width="1874" height="789" fill="#fff" />
            <path d="M31 197.500h1874M31.500 197v789M1904.500 197v789M31 985.500h1874" stroke="#6c6c6c" stroke-width="1.200" />
            <path d="M32 198.500h1872M32.700 198v787M1903.300 198v787M32 984h1872" stroke="#d0d0d0" stroke-width="1.300" />
            <path d="M161.300 197h15l16 97h-46z" /><rect x="144.500" y="294" width="48.200" height="692" /><path d="M145 294.400h47.500" stroke="#444" stroke-width=".800" />
            <path d="M31 610q2.500 20 0 42z" />
            <rect x="603" y="540" width="729.300" height="103" rx="1.500" fill="#80eaff" stroke="#009fda" stroke-width="2" />
            <path d="M590 473.500h1080q8.500 1 8.500 8V874h-7v7.500H590V874h-7V481h7zM597 488v379h1067V672h-240v-7.500h-7.500V488zM1430.600 489v168.700H1664V489z" fill-rule="evenodd" />
            <path d="M1664 860h7.500v21.500H1664z" />
            <path d="M1678 671h86.500v14.500H1678zM1858 671h47v14.500h-47zM968 902h14.700v84H968zM604.800 619h680.600v6.300H604.800z" />
            <path d="M1680.500 933.500H1905V948h-217v38h-14.500v-35c-8 6-14.500 18-19.500 35h-14.500c8-29 23-52.500 41-52.500z" />
            <g class="cad">
              <g transform="translate(605 605) scale(1 1.045)"><text clip-path="url(#footless)" x="0 71.2 163.6 249 291.6 377.5 423.9 490.8 562 637.2">LCS-P-1651</text></g>
              <text transform="translate(1468.4 619.600) scale(1 1.045)">2A</text>
              <g transform="translate(318 898.800) rotate(-90) scale(1 1.045)"><text clip-path="url(#footless)" x="0 85.4 170.8 206.4 249 334.4 423.9 491">PSI-SS16</text></g>
            </g>
          </svg>
          <div class="vbar"><svg width="15" height="789"><path d="M4 9l3.500-3.500L11 9M4 779.500l3.500 3.500 3.500-3.500" fill="none" stroke="#666" stroke-width="1.700" /><path d="M1 344.500h8" stroke="#1e88e5" /><rect x="10" y="333" width="6" height="27" rx="2.500" fill="#808080" /></svg></div>
        </div>
        <div class="hbar"><svg width="1889" height="15"><path d="M9 4L5.500 7.500 9 11M1864.500 4l3.500 3.500-3.500 3.500" fill="none" stroke="#555" stroke-width="1.700" /><rect x="336" y="5" width="109" height="5" rx="2.500" fill="#838383" /></svg></div>
        <footer class="status">
          <div class="sl">
            <span class="handle"><i class="grip" /><Ic n="pin" :w="7" :h="8" /></span>
            <svg class="gears" width="24" height="24"><use href="#i-gear" x="0" y="0" width="15" height="15" color="#808080" /><use href="#i-gear" x="10" y="10" width="14" height="14" color="#ffa726" /></svg>
            <span v-fit="51">Options...</span><Ic class="ml6" n="chev" :w="8" :h="6" /><i class="vs ml3" />
            <svg class="ml4" width="17" height="24"><path d="M2.500 20V7.500H14" fill="none" stroke="#555" stroke-width="1.300" /><path d="M12 5l4 2.500-4 2.500zM0 16h5l-2.500 4z" fill="#555" /><path d="M5 19.500h9.500V10" fill="none" stroke="#777" stroke-dasharray="1 1.500" /></svg>
            <span class="two"><span v-fit="69">W: 2383.94pt</span><span v-fit="68">H: 1683.78pt</span></span><i class="vs" />
            <svg class="ml4" width="16" height="24"><path d="M0 11.500h13M6.500 5v13" stroke="#444" stroke-width="1.200" /><path d="M7.500 12.500l7.500 3-3 1.500-1 3.500z" fill="#666" /></svg>
            <span class="two xy"><span v-fit="14">X :</span><span v-fit="14">Y :</span></span>
          </div>
          <div class="sc">
            <span class="handle"><i class="grip" /><Ic n="pin" :w="7" :h="8" /></span>
            <Ic n="first" /><Ic n="prev" /><div class="pageno"><span>1</span><svg width="8" height="18"><path d="M1 17L6.500 1" stroke="#777" /></svg><sup>1</sup></div><Ic class="flip" n="prev" /><Ic class="flip" n="first" />
            <i class="vs" /><Ic n="back" /><Ic class="flip dim" n="back" />
          </div>
          <div class="sr">
            <span class="handle"><i class="grip" /><Ic n="pin" :w="7" :h="8" /></span>
            <svg class="lay1" width="18" height="24"><path d="M1.500 2.500h11l3.500 4V22H1.500z" fill="#fff" stroke="#666" /><path d="M11 2l5.500 6.500-4-2z" fill="#555" /></svg>
            <span class="on"><svg width="28" height="28"><path d="M6.500 3v9h15V3M6.500 25v-9.500h10l5 6V25" fill="#fff" stroke="#666" stroke-width="1.200" /><path d="M6 3.500h16" stroke="#999" /><path d="M14 15l8 9.500-5-2.500z" fill="#555" /></svg></span>
            <svg class="lay3" width="54" height="24"><g fill="#fafafa" stroke="#aaa"><path d="M1.500 5.500h7l3 3.500v10.500h-10zM14.500 5.500h7l3 3.500v10.500h-10zM29.500 2v8.500h10V2zM42.500 2v8.500h10V2zM29.500 23.500v-9h6l4 4v5M42.500 23.500v-9h6l4 4v5" /></g><path d="M8 5l4 4.500-3-1zM21 5l4 4.500-3-1zM35 14l5 5-3-1zM48 14l5 5-3-1z" fill="#aaa" /></svg>
            <span class="handle h2"><i class="grip" /><Ic n="pin" :w="7" :h="8" /></span>
            <div class="combo"><span v-fit="34">1000%</span><Ic n="chev" :w="8" :h="6" /></div><i class="vs ml2" />
            <Ic class="ml4" n="minus" />
            <svg class="slider" width="100" height="24"><path d="M1 12h72" stroke="#8f8f8f" stroke-width="2.600" stroke-linecap="round" /><path d="M72 12h27" stroke="#bfbfbf" stroke-width="2.600" stroke-linecap="round" /><path d="M49.500 6v2M49.500 16v2" stroke="#888" /><circle cx="71.500" cy="12" r="9" fill="#f8f8f8" stroke="#666" stroke-width="1.200" /><circle cx="71.500" cy="12" r="4" fill="#808080" /></svg>
            <Ic n="plus" /><span class="handle h3"><i class="grip" /><Ic n="pin" :w="7" :h="8" /></span>
            <Ic class="pdf" n="pdf" :w="22" /><Ic n="chev" class="ml4" :w="8" :h="6" />
            <span class="over"><svg width="10" height="8"><path d="M1.500 1l3.500 3 3.500-3M1 7h8" fill="none" stroke="#444" stroke-width="1.300" /></svg></span>
          </div>
        </footer>
      </main>
    </div>
  </div>
</template>

<style>
body { overflow: hidden; }
</style>

<style scoped>
.defs { position: absolute; }
.app { width: 1920px; height: 1032px; background: #f4f4f4; color: #000; font: 12px/14px "Noto Sans", "Open Sans", sans-serif; display: flex; flex-direction: column; overflow: hidden; white-space: nowrap; }
.ic, svg { display: block; flex: none; }
span { flex: none; }
.flip { transform: scaleX(-1); }
.dim { opacity: .5; }
.ml2 { margin-left: 2px; } .ml3 { margin-left: 3px; } .ml4 { margin-left: 4px; } .ml5 { margin-left: 5px; } .ml6 { margin-left: 6px; } .ml8 { margin-left: 8px; }
.vs { width: 1px; height: 28px; background: #b8b8b8; flex: none; }
.title { height: 29px; background: #dedede; display: flex; }
.qat { display: flex; align-items: center; height: 30px; width: 349px; flex: none; }
.caption { margin-left: 694px; color: #6d6d6d; line-height: 30px; width: 310px; }
.winbar { display: flex; align-items: center; height: 30px; width: 361px; margin-left: auto; }
.quick { width: 152px; height: 23px; box-sizing: border-box; border: 1px solid #aaa; border-radius: 2px; background: #fff; display: flex; align-items: center; gap: 4px; padding-left: 2px; color: #8b8b8b; }
.tabs { height: 31px; background: #dedede; display: flex; align-items: stretch; border-bottom: 1px solid #adadad; box-sizing: border-box; line-height: 31px; }
.file { width: 55px; background: #ad4a4a; color: #fff; display: flex; justify-content: center; border-radius: 3px 3px 0 0; margin-top: 1px; line-height: 29px; }
.home { width: 51px; margin-left: 3px; background: #f4f4f4; border-radius: 3px 3px 0 0; color: #17365d; display: flex; justify-content: center; height: 31px; position: relative; box-shadow: 0 0 2px #888; clip-path: inset(-3px -3px 0 -3px); }
.home b { position: absolute; left: 6px; bottom: 2px; width: 39px; height: 2px; background: #7d9fb5; }
.tablist { display: flex; gap: 18.100px; margin-left: 9px; }
.ctx { width: 72px; height: 57px; margin: -28px 0 0 11px; background: #dbd6b8; border: 1px solid #d0bd6e; border-top: 2px solid #c9a51b; border-bottom: 0; display: flex; flex-direction: column; align-items: center; line-height: 12px; z-index: 1; }
.c1 { margin-top: 3px; } .c3 { margin-top: 9px; }
.right { display: flex; margin-left: auto; height: 30px; align-items: center; width: 166px; }
.findbtn { width: 64px; height: 28px; box-sizing: border-box; border: 1px solid #b9b19c; background: #e5cf9d; display: flex; align-items: center; gap: 4px; padding-left: 2px; }
.searchbtn { display: flex; align-items: center; gap: 3px; margin: 0 16px 0 2px; }
.ribbon { height: 102px; display: flex; background: #f4f4f4; border-bottom: 1px solid #333; }
.group { border-right: 1px solid #c6c6c6; box-sizing: border-box; display: flex; flex-direction: column; }
.body { height: 86px; display: flex; }
.cap { height: 16px; display: flex; justify-content: center; line-height: 17px; color: #808080; }
.tools { width: 268px; } .view { width: 177px; } .objects { width: 217px; } .comment { width: 269px; } .links { width: 209px; } .protect { width: 66px; }
.objects .cap, .view .cap { padding-right: 2px; }
.big { display: flex; flex-direction: column; align-items: center; padding-top: 5px; box-sizing: border-box; line-height: 13px; }
.big > span:first-of-type { margin-top: 4px; }
.w53 { width: 53px; } .w52 { width: 52px; } .w65 { width: 65px; } .w55 { width: 55px; } .w56 { width: 56px; } .w48 { width: 48px; }
.tools .w52 { width: 51px; } .tools .w65 { width: 66px; }
.dc { margin-top: 4px; }
.withchev { display: flex; align-items: center; gap: 2px; }
.col { display: flex; flex-direction: column; padding-top: 2px; box-sizing: border-box; }
.small { height: 28px; display: flex; align-items: center; gap: 3px; }
.small .ml6 { margin-left: 3px; }
.view .col { padding-left: 4px; }
.small.gap4 { gap: 4px; }
.ss { width: 1px; height: 28px; background: #c6c6c6; margin: 0 -1px; }
.combo { box-sizing: border-box; height: 23px; border: 1px solid #b3b3b3; border-radius: 2px; background: #fff; display: flex; align-items: center; justify-content: space-between; padding: 0 3px; width: 82px; }
.wide { width: 113px; }
.dotted { position: relative; display: block; }
.dotted em { position: absolute; right: -2px; bottom: -2px; width: 4px; height: 4px; border-radius: 2px; background: #5f9e25; }
.comment .col, .links .col { padding-left: 4px; }
.c111 { width: 115px; } .comment .c98 { width: 97px; padding-left: 0; border-right: 1px solid #c6c6c6; }
.links .col { padding-left: 1px; }
.small u { width: 0; height: 0; border-left: 4px solid transparent; border-bottom: 4px solid #222; margin-top: 13px; margin-left: -1px; }
.stamp { width: 52px; height: 84px; margin: 2px 0 0 1px; padding-top: 2px; background: #e5cf9d; border: 1px solid #b5ad97; border-radius: 1px; }
.strip { height: 32px; display: flex; background: repeating-linear-gradient(45deg, rgba(255,255,255,.05) 0 1.400px, transparent 1.400px 2.800px), repeating-linear-gradient(-45deg, rgba(255,255,255,.05) 0 1.400px, transparent 1.400px 2.800px), linear-gradient(#7c7c7c, #848484); flex: none; }
.doctab { width: 216px; background: #fcfcfc; box-sizing: border-box; padding-left: 5px; line-height: 32px; position: relative; display: flex; border-radius: 2px 2px 0 0; }
.star { color: #17365d; margin-left: 3px; }
.doctab .x { position: absolute; right: 6px; top: 6px; }
.doctab b { position: absolute; left: 5px; right: 5px; bottom: 2px; height: 2px; background: #999; }
.newtab, .closeall { display: flex; align-items: center; justify-content: center; background: #c9c9c9; border-radius: 2px; }
.newtab { width: 27px; height: 27px; margin: 3px 0 0 2px; }
.closeall { width: 30px; height: 29px; margin: 1px 1px 0 auto; background: #d2d2d2; }
.mid { display: flex; flex: 1; border-top: 2px solid #fafafa; min-height: 0; }
.side { width: 31px; background: #f4f4f4; flex: none; }
.sidehead { height: 11px; background: #e6e6e6; display: flex; justify-content: flex-end; padding: 1px 1px 0 0; box-sizing: border-box; }
.grip { display: block; width: 10px; height: 16px; background: radial-gradient(circle, #aaa 0 .6px, transparent .9px) 0 0 / 2.500px 2.500px; }
.hg { width: 25px; height: 10px; margin: 1px 0 3px 3px; }
.icons { display: flex; flex-direction: column; align-items: flex-start; gap: 4px; padding-left: 3px; }
.side hr { border: 0; height: 1px; background: #c4c4c4; margin: 3px 2px 3px 1px; }
.view-area { flex: 1; display: flex; flex-direction: column; min-width: 0; }
.row { display: flex; height: 789px; }
.cad { font: 128px "Liberation Sans", Arial, sans-serif; }
.vbar { width: 15px; background: #f0f0f0; }
.hbar { height: 15px; background: #efefef; }
.status { height: 31px; display: flex; align-items: center; background: #f4f4f4; }
.handle { display: flex; flex-direction: column; gap: 2px; width: 10px; height: 26px; margin-left: 2px; flex: none; }
.handle .ic { margin-left: 1px; }
.sl, .sc, .sr { display: flex; align-items: center; height: 31px; flex: none; }
.sl { width: 798px; }
.gears { margin: 0 3px 0 2px; }
.two { display: flex; flex-direction: column; line-height: 13px; width: 72px; }
.xy { width: 20px; margin-left: 2px; }
.sc { width: 642px; gap: 4px; }
.sc .handle { margin-right: -2px; }
.sc .vs { margin: 0 -1px; }
.pageno { width: 96px; height: 23px; box-sizing: border-box; border: 1px solid #c2c2c2; border-radius: 2px; background: #fafafa; display: flex; align-items: center; justify-content: flex-end; padding-right: 3px; color: #666; margin: 0 -1px; }
.pageno sup { font-size: 11px; line-height: 12px; margin-top: -5px; vertical-align: baseline; }
.sr { flex: 1; }
.lay1 { margin-left: 5px; }
.on { width: 26px; height: 28px; background: #e5cf9d; outline: 1px solid #c9b88e; margin: 0 2px 0 6px; }
.on svg { margin-left: -1px; }
.h2 { margin-left: 3px; margin-right: 1px; }
.slider { margin: 0 4px; }
.h3 { margin-left: 5px; }
.pdf { margin-left: 4px; }
.over { width: 11px; height: 31px; background: #e8e8e8; margin-left: auto; }
</style>
